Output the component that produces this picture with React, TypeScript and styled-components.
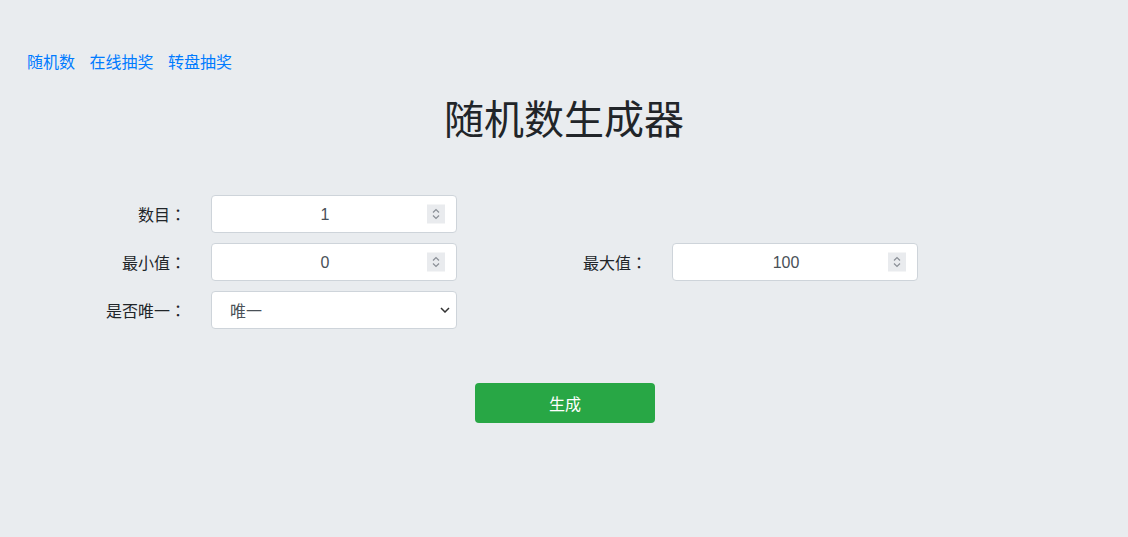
import React from "react";
import styled, { createGlobalStyle } from "styled-components";

const Global = createGlobalStyle`
  html, body { margin: 0; padding: 0; }
  body {
    background: #e9ecef;
    font-family: "Liberation Sans", Arial, "Noto Sans CJK SC", sans-serif;
    color: #212529;
    font-size: 16px;
  }
  * { box-sizing: border-box; }
`;

const Page = styled.div`
  width: 1128px;
  height: 537px;
  padding-top: 51px;
`;

const Nav = styled.nav`
  display: flex;
  gap: 14.5px;
  padding-left: 27px;
  height: 24px;
  line-height: 24px;
`;

const NavLink = styled.a`
  color: #007bff;
  text-decoration: none;
  font-size: 16px;
`;

const Title = styled.h1`
  margin: 21px 0 0;
  height: 48px;
  line-height: 48px;
  font-size: 40px;
  font-weight: 400;
  text-align: center;
  color: #212529;
`;

const Form = styled.div`
  margin-top: 51px;
  display: grid;
  grid-template-columns: 211px 246px 215px 246px;
  grid-auto-rows: 38px;
  row-gap: 10px;
`;

const Label = styled.label<{ $col?: number }>`
  grid-column: ${(p) => p.$col ?? 1};
  display: flex;
  align-items: center;
  justify-content: flex-end;
  padding-right: 25px;
  font-size: 16px;
  color: #212529;
  white-space: nowrap;
`;

const Colon = styled.span`
  font-family: "Noto Sans CJK TC", "Noto Sans CJK SC", sans-serif;
`;

const Field = styled.div<{ $col?: number }>`
  grid-column: ${(p) => p.$col ?? 2};
  position: relative;
  background: #fff;
  border: 1px solid #ced4da;
  border-radius: 4px;
  display: flex;
  align-items: center;
`;

const NumberValue = styled.span`
  flex: 1;
  text-align: center;
  padding-right: 18px;
  padding-top: 2px;
  font-size: 16px;
  color: #495057;
`;

const Spinner = styled.span`
  position: absolute;
  right: 11px;
  top: 50%;
  transform: translateY(-50%);
  width: 18px;
  height: 19px;
  background: #e9ebee;
  display: flex;
  align-items: center;
  justify-content: center;
`;

const SelectValue = styled.span`
  flex: 1;
  padding-left: 18px;
  font-size: 16px;
  color: #495057;
`;

const Chevron = styled.span`
  position: absolute;
  right: 6px;
  top: 50%;
  transform: translateY(-50%);
  display: flex;
`;

const ButtonRow = styled.div`
  margin-top: 54px;
  display: flex;
  justify-content: center;
  padding-left: 2px;
`;

const Button = styled.button`
  width: 180px;
  height: 40px;
  background: #28a745;
  color: #fff;
  border: none;
  border-radius: 4px;
  font-family: inherit;
  font-size: 16px;
  cursor: pointer;
`;

const SpinIcon = () => (
  <svg width="10" height="13" viewBox="0 0 10 13">
    <path d="M2 5 L5 2 L8 5" fill="none" stroke="#8a8f96" strokeWidth="1.2" />
    <path d="M2 8 L5 11 L8 8" fill="none" stroke="#8a8f96" strokeWidth="1.2" />
  </svg>
);

const NumberField: React.FC<{ value: string; col?: number }> = ({ value, col }) => (
  <Field $col={col}>
    <NumberValue>{value}</NumberValue>
    <Spinner>
      <SpinIcon />
    </Spinner>
  </Field>
);

const FieldLabel: React.FC<{ text: string; col?: number }> = ({ text, col }) => (
  <Label $col={col}>
    {text}
    <Colon>：</Colon>
  </Label>
);

export default function App() {
  return (
    <>
      <Global />
      <Page>
        <Nav>
          <NavLink href="#">随机数</NavLink>
          <NavLink href="#">在线抽奖</NavLink>
          <NavLink href="#">转盘抽奖</NavLink>
        </Nav>
        <Title>随机数生成器</Title>
        <Form>
          <FieldLabel text="数目" />
          <NumberField value="1" />
          <FieldLabel text="最小值" col={1} />
          <NumberField value="0" />
          <FieldLabel text="最大值" col={3} />
          <NumberField value="100" col={4} />
          <FieldLabel text="是否唯一" col={1} />
          <Field>
            <SelectValue>唯一</SelectValue>
            <Chevron>
              <svg width="10" height="6" viewBox="0 0 10 6">
                <path d="M1 1 L5 5 L9 1" fill="none" stroke="#333" strokeWidth="1.5" />
              </svg>
            </Chevron>
          </Field>
        </Form>
        <ButtonRow>
          <Button>生成</Button>
        </ButtonRow>
      </Page>
    </>
  );
}
